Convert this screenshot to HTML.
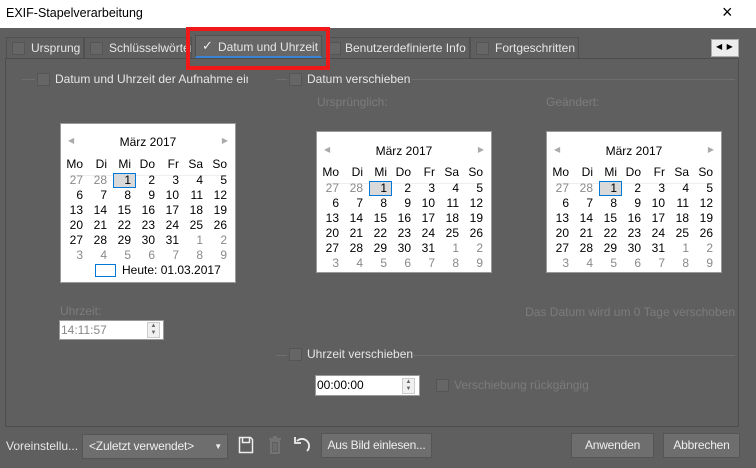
<!DOCTYPE html>
<html><head><meta charset="utf-8"><style>
*{box-sizing:border-box;margin:0;padding:0}
body{width:756px;height:468px;background:#5f5f5f;font-family:"Liberation Sans",sans-serif;font-size:12px;color:#e6e6e6;position:relative;overflow:hidden}
.a{position:absolute;white-space:nowrap}
.cb{position:absolute;width:13px;height:13px;background:#666;border:1px solid #555}
.dis{color:#7c7c7c}
.tab{position:absolute;top:37px;height:21px;border:1px solid #505050;border-bottom:none;padding:3px 0 0 24px;font-size:12px;white-space:nowrap;overflow:hidden}
.tab .cb{left:5px;top:4px}
.cal{position:absolute;width:176px;height:160px;background:#fff;border:1px solid #9a9a9a;color:#000}
.cal .hd{position:absolute;top:11px;left:0;width:100%;text-align:center}
.cal .l,.cal .r{position:absolute;top:12px;color:#aaa;font-size:8px}
.cal .l{left:7px}.cal .r{right:7px}
.g{position:absolute;left:1px;top:32px;width:168px}
.g span{display:inline-block;width:24px;text-align:right;padding-right:3px;height:15px;line-height:15px}
.g .o{color:#8a8a8a}
.g .dn{height:17px;line-height:17px}
.ln{position:absolute;left:9px;top:51px;width:157px;height:1px;background:#eee}
.sel{position:absolute;left:52px;top:49px;width:23px;height:15px;background:#d9d9d9;border:1px solid #0078d7}
.btn{position:absolute;height:25px;background:#6e6e6e;border:1px solid #555;color:#eee;text-align:center;line-height:23px;white-space:nowrap;letter-spacing:-0.2px}
.hl{position:absolute;height:1px;background:#6e6e6e}
</style></head><body>
<div class="a" style="left:0;top:0;width:756px;height:28px;background:#fff"></div>
<div class="a" style="left:6px;top:6px;color:#000;font-size:12.5px">EXIF-Stapelverarbeitung</div>
<div class="a" style="left:722px;top:2px;color:#000;font-size:18px">×</div>

<div class="a" style="left:5px;top:58px;width:734px;height:369px;border:1px solid #4d4d4d"></div>
<div class="tab" style="left:6px;width:78px">Ursprung<div class="cb"></div></div>
<div class="tab" style="left:84px;width:108px">Schlüsselwörter<div class="cb"></div></div>
<div class="tab" style="left:195px;top:35px;height:23px;width:127px;background:#676767;border-bottom:2px solid #3a82d4;padding-left:22px;padding-top:4px">Datum und Uhrzeit<div class="a" style="left:6px;top:2px;font-size:13px;color:#eee">✓</div></div>
<div class="tab" style="left:328px;width:142px;padding-left:16px">Benutzerdefinierte Info<div class="cb" style="left:-1px"></div></div>
<div class="tab" style="left:470px;width:109px">Fortgeschritten<div class="cb"></div></div>
<div class="a" style="left:186px;top:27px;width:144px;height:43px;border:4px solid #f01818"></div>
<div class="a" style="left:711px;top:39px;width:28px;height:18px;background:#ececec;border:1px solid #aaa"></div>
<div class="a" style="left:716px;top:42px;color:#000;font-size:8px">◀ &nbsp;▶</div>

<div class="hl" style="left:22px;top:79px;width:13px"></div>
<div class="cb" style="left:37px;top:73px"></div>
<div class="a" style="left:55px;top:72px;width:193px;overflow:hidden">Datum und Uhrzeit der Aufnahme ein</div>
<div class="hl" style="left:276px;top:79px;width:11px"></div>
<div class="cb" style="left:289px;top:73px"></div>
<div class="a" style="left:307px;top:72px">Datum verschieben</div>
<div class="hl" style="left:412px;top:79px;width:323px"></div>
<div class="a dis" style="left:317px;top:95px">Ursprünglich:</div>
<div class="a dis" style="left:546px;top:95px">Geändert:</div>

<div class="cal" style="left:60px;top:123px;height:160px"><div class="l">◀</div><div class="r">▶</div><div class="hd">März 2017</div><div class="ln"></div><div class="sel"></div>
<div class="g"><span class="dn">Mo</span><span class="dn">Di</span><span class="dn">Mi</span><span class="dn">Do</span><span class="dn">Fr</span><span class="dn">Sa</span><span class="dn">So</span><span class="o">27</span><span class="o">28</span><span>1</span><span>2</span><span>3</span><span>4</span><span>5</span><span>6</span><span>7</span><span>8</span><span>9</span><span>10</span><span>11</span><span>12</span><span>13</span><span>14</span><span>15</span><span>16</span><span>17</span><span>18</span><span>19</span><span>20</span><span>21</span><span>22</span><span>23</span><span>24</span><span>25</span><span>26</span><span>27</span><span>28</span><span>29</span><span>30</span><span>31</span><span class="o">1</span><span class="o">2</span><span class="o">3</span><span class="o">4</span><span class="o">5</span><span class="o">6</span><span class="o">7</span><span class="o">8</span><span class="o">9</span></div>
<div class="a" style="left:34px;top:140px;width:21px;height:13px;border:1px solid #0078d7"></div><div class="a" style="left:61px;top:139px">Heute: 01.03.2017</div></div>

<div class="cal" style="left:316px;top:131px;height:142px"><div class="l" style="top:13px">◀</div><div class="r" style="top:13px">▶</div><div class="hd" style="top:12px">März 2017</div><div class="ln"></div><div class="sel"></div>
<div class="g"><span class="dn">Mo</span><span class="dn">Di</span><span class="dn">Mi</span><span class="dn">Do</span><span class="dn">Fr</span><span class="dn">Sa</span><span class="dn">So</span><span class="o">27</span><span class="o">28</span><span>1</span><span>2</span><span>3</span><span>4</span><span>5</span><span>6</span><span>7</span><span>8</span><span>9</span><span>10</span><span>11</span><span>12</span><span>13</span><span>14</span><span>15</span><span>16</span><span>17</span><span>18</span><span>19</span><span>20</span><span>21</span><span>22</span><span>23</span><span>24</span><span>25</span><span>26</span><span>27</span><span>28</span><span>29</span><span>30</span><span>31</span><span class="o">1</span><span class="o">2</span><span class="o">3</span><span class="o">4</span><span class="o">5</span><span class="o">6</span><span class="o">7</span><span class="o">8</span><span class="o">9</span></div></div>

<div class="cal" style="left:546px;top:131px;height:142px"><div class="l" style="top:13px">◀</div><div class="r" style="top:13px">▶</div><div class="hd" style="top:12px">März 2017</div><div class="ln"></div><div class="sel"></div>
<div class="g"><span class="dn">Mo</span><span class="dn">Di</span><span class="dn">Mi</span><span class="dn">Do</span><span class="dn">Fr</span><span class="dn">Sa</span><span class="dn">So</span><span class="o">27</span><span class="o">28</span><span>1</span><span>2</span><span>3</span><span>4</span><span>5</span><span>6</span><span>7</span><span>8</span><span>9</span><span>10</span><span>11</span><span>12</span><span>13</span><span>14</span><span>15</span><span>16</span><span>17</span><span>18</span><span>19</span><span>20</span><span>21</span><span>22</span><span>23</span><span>24</span><span>25</span><span>26</span><span>27</span><span>28</span><span>29</span><span>30</span><span>31</span><span class="o">1</span><span class="o">2</span><span class="o">3</span><span class="o">4</span><span class="o">5</span><span class="o">6</span><span class="o">7</span><span class="o">8</span><span class="o">9</span></div></div>

<div class="a dis" style="left:60px;top:304px">Uhrzeit:</div>
<div class="a" style="left:59px;top:320px;width:105px;height:20px;background:#fff;border:1px solid #999"></div>
<div class="a" style="left:61px;top:323px;color:#888">14:11:57</div>
<div class="a" style="left:147px;top:322px;width:13px;height:16px;border:1px solid #ccc;background:#f0f0f0;font-size:6px;color:#666;line-height:7px;text-align:center">▲<br>▼</div>
<div class="a dis" style="right:21px;top:305px">Das Datum wird um 0 Tage verschoben</div>

<div class="hl" style="left:276px;top:355px;width:11px"></div>
<div class="cb" style="left:289px;top:348px"></div>
<div class="a" style="left:307px;top:347px">Uhrzeit verschieben</div>
<div class="hl" style="left:412px;top:355px;width:323px"></div>
<div class="a" style="left:315px;top:375px;width:105px;height:21px;background:#fff;border:1px solid #999"></div>
<div class="a" style="left:317px;top:378px;color:#000">00:00:00</div>
<div class="a" style="left:402px;top:378px;width:13px;height:16px;border:1px solid #ccc;background:#f0f0f0;font-size:6px;color:#666;line-height:7px;text-align:center">▲<br>▼</div>
<div class="cb" style="left:436px;top:379px"></div>
<div class="a dis" style="left:454px;top:378px">Verschiebung rückgängig</div>

<div class="a" style="left:6px;top:439px">Voreinstellu...</div>
<div class="btn" style="left:82px;top:434px;width:146px;text-align:left;padding-left:6px">&lt;Zuletzt verwendet&gt;<span class="a" style="right:5px;top:0;font-size:8px">▼</span></div>
<svg class="a" style="left:238px;top:436px" width="16" height="18" viewBox="0 0 16 18"><path d="M1.5 1.5h11l2 2v13h-13z" fill="none" stroke="#eee" stroke-width="1.5"/><path d="M4.5 1.5v5h7v-5" fill="none" stroke="#eee" stroke-width="1.5"/></svg>
<svg class="a" style="left:268px;top:436px" width="14" height="18" viewBox="0 0 14 18"><path d="M1 3h12M5 1h4M3 5h8v12h-8z" fill="none" stroke="#7a7a7a" stroke-width="1.5"/><path d="M6 7v8M8 7v8" stroke="#7a7a7a"/></svg>
<svg class="a" style="left:294px;top:434px" width="18" height="20" viewBox="0 0 18 20"><path d="M3 7a6 6 0 1 1 10 10" fill="none" stroke="#eee" stroke-width="1.8"/><path d="M1 3v6h6" fill="none" stroke="#eee" stroke-width="1.8"/></svg>
<div class="btn" style="left:321px;top:433px;width:111px">Aus Bild einlesen...</div>
<div class="btn" style="left:571px;top:433px;width:83px">Anwenden</div>
<div class="btn" style="left:663px;top:433px;width:77px">Abbrechen</div>
</body></html>
